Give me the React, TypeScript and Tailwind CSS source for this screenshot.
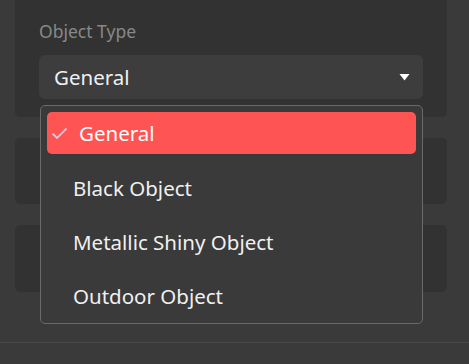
import React from "react";

export default function App() {
  const items = ["General", "Black Object", "Metallic Shiny Object", "Outdoor Object"];
  return (
    <div
      className="relative w-[469px] h-[364px] overflow-hidden bg-[#3a3a3a]"
      style={{ fontFamily: '"Noto Sans", "Open Sans", sans-serif' }}
    >
      <div className="flex flex-col gap-[21px] px-[15px] pr-[22px] -mt-[10px]">
        <div className="h-[127px] rounded-[5px] bg-[#323232] pt-[29px] px-[24px]">
          <div className="text-[17.5px] leading-[24px] text-[#888888]">Object Type</div>
          <div className="mt-[12px] h-[44px] rounded-[6px] bg-[#3d3d3d] flex items-center justify-between pl-[15px] pr-[13px]">
            <span className="text-[20.5px] text-[#f0f0f0]">General</span>
            <svg width="11" height="8" viewBox="0 0 11 8">
              <path d="M0.5 1 L10.5 1 L5.5 7.5 Z" fill="#ffffff" />
            </svg>
          </div>
        </div>
        <div className="h-[66px] rounded-[5px] bg-[#323232]" />
        <div className="h-[67px] rounded-[5px] bg-[#323232]" />
      </div>
      <div className="absolute left-0 right-0 top-[342px] h-px bg-[#4a4a4a]" />
      <div className="absolute left-[40px] top-[105px] w-[383px] h-[219px] rounded-[5px] border border-[#6a6a6a] bg-[#3a3a3a] px-[6px] pt-[6px]">
        {items.map((it, i) =>
          i === 0 ? (
            <div
              key={it}
              className="h-[42px] mb-[7px] rounded-[5px] bg-[#ff5454] flex items-center pl-[4px] text-[20.5px] text-white"
            >
              <svg width="17" height="13" viewBox="0 0 17 13" className="mr-[11px]">
                <path d="M1.5 6.5 L6 11 L15.5 1.5" fill="none" stroke="#d8c9dc" strokeWidth="1.8" />
              </svg>
              {it}
            </div>
          ) : (
            <div key={it} className="h-[54px] flex items-center pl-[26px] text-[20.5px] text-[#f0f0f0]">
              {it}
            </div>
          )
        )}
      </div>
    </div>
  );
}
